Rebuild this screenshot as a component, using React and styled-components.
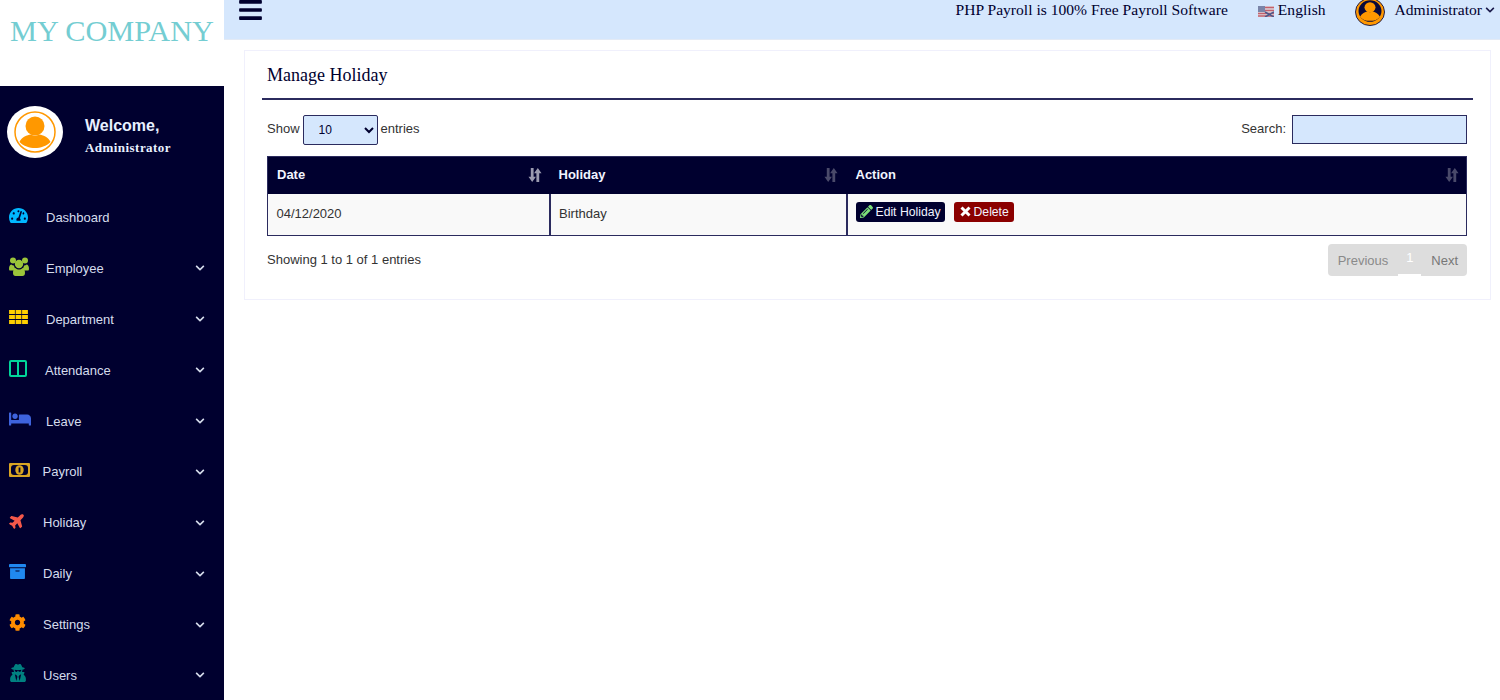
import React from "react";
import styled, { createGlobalStyle } from "styled-components";
import {
  FaBars,
  FaTachometerAlt,
  FaBed,
  FaPlane,
  FaArchive,
  FaCog,
  FaUserSecret,
  FaPencilAlt,
  FaChevronDown,
} from "react-icons/fa";

const NAVY = "#00002f";

const GlobalStyle = createGlobalStyle`
  html, body {
    margin: 0;
    padding: 0;
    height: 100%;
    background: #ffffff;
  }
  body {
    font-family: "Liberation Sans", Arial, sans-serif;
    overflow: hidden;
  }
  * { box-sizing: border-box; }
`;

const Page = styled.div`
  display: flex;
  width: 1500px;
  height: 700px;
  overflow: hidden;
`;

const Sidebar = styled.aside`
  width: 224px;
  flex: none;
  display: flex;
  flex-direction: column;
`;

const LogoBox = styled.div`
  flex: none;
  height: 86px;
  padding: 13px 0 0 10px;
  font-family: "Liberation Serif", serif;
  font-size: 30.3px;
  line-height: 36px;
  color: #74cdd2;
  white-space: nowrap;
`;

const SideBody = styled.div`
  flex: none;
  height: 614px;
  background: ${NAVY};
  display: flex;
  flex-direction: column;
`;

const Profile = styled.div`
  flex: none;
  height: 106px;
  padding: 20px 0 0 7px;
  display: flex;
  gap: 22px;
`;

const AvatarCircle = styled.div`
  width: 56px;
  height: 52px;
  border-radius: 50%;
  background: #fff;
  display: flex;
  align-items: center;
  justify-content: center;
`;

const ProfileText = styled.div`
  padding-top: 11px;
  color: #e8f0ff;
`;

const Welcome = styled.div`
  font-size: 16px;
  font-weight: 700;
  line-height: 18px;
`;

const ProfileName = styled.div`
  margin-top: 5px;
  font-family: "Liberation Serif", serif;
  font-size: 13px;
  font-weight: 700;
  line-height: 15px;
  letter-spacing: 0.45px;
`;

const Menu = styled.nav`
  display: flex;
  flex-direction: column;
`;

const MenuItem = styled.a`
  flex: none;
  height: 50.9px;
  display: flex;
  align-items: center;
  padding: 0 19px 0 9px;
  color: #d5dcec;
  font-size: 13px;
  svg { flex: none; }
`;

const MenuIcon = styled.span`
  width: ${(p) => p.$w}px;
  flex: none;
  display: flex;
  align-items: center;
  color: ${(p) => p.$color};
  transform: translateY(-2px);
`;

const MenuLabel = styled.span`
  flex: 1;
`;

const Chevron = styled(FaChevronDown)`
  color: #d5dcec;
  font-size: 10px;
`;

const TiltedPlane = styled(FaPlane)`
  transform: rotate(-45deg);
`;

const Main = styled.main`
  flex: 1;
  display: flex;
  flex-direction: column;
  min-width: 0;
`;

const TopBar = styled.header`
  height: 40px;
  flex: none;
  background: #d5e7fd;
  border-bottom: 1px solid #e3eaf5;
  padding: 0 5px 0 15px;
  display: flex;
  align-items: flex-start;
  color: #00002f;
  font-family: "Liberation Serif", serif;
  font-size: 15.6px;
`;

const Burger = styled(FaBars)`
  font-size: 23px;
  width: 23px;
  height: 26px;
  margin-top: -3px;
  color: ${NAVY};
`;

const TopRight = styled.div`
  margin-left: auto;
  display: flex;
  align-items: center;
  height: 20px;
`;

const Lang = styled.span`
  display: flex;
  align-items: center;
  gap: 4px;
  margin-left: 30px;
`;

const UserPic = styled.span`
  display: flex;
  margin: 4px 10px 0 29px;
`;

const TopChevron = styled(FaChevronDown)`
  font-size: 10px;
  margin-left: 3px;
  color: #1a1a4a;
`;

const Content = styled.div`
  flex: 1;
  padding: 10px 9px 0 20px;
`;

const Card = styled.section`
  height: 250px;
  border: 1px solid #f0f0fc;
  padding: 0 17px 0 17px;
`;

const CardTitle = styled.h2`
  margin: 0;
  height: 49px;
  padding: 13px 0 0 5px;
  border-bottom: 2px solid #2b2b5e;
  font-family: "Liberation Serif", serif;
  font-size: 18px;
  font-weight: 400;
  line-height: 22px;
  color: #00002f;
`;

const Wrap = styled.div`
  padding: 0 6px 0 5px;
  font-size: 13px;
  color: #333;
`;

const Controls = styled.div`
  height: 56px;
  display: flex;
  align-items: flex-start;
  justify-content: space-between;
  padding-top: 15px;
`;

const ControlGroup = styled.label`
  display: flex;
  align-items: flex-start;
  gap: ${(p) => p.$gap}px;
  height: 30px;
  line-height: 27px;
`;

const PageSize = styled.select`
  width: 75px;
  height: 30px;
  padding: 0 0 0 11px;
  background-color: #d5e7fd;
  border: 1px solid #2b2b5e;
  border-radius: 2px;
  font-family: "Liberation Sans", Arial, sans-serif;
  font-size: 12px;
  color: #00002f;
`;

const SearchInput = styled.input`
  width: 175px;
  height: 29px;
  background: #d5e7fd;
  border: 1px solid #2b2b5e;
  border-radius: 0;
  outline: none;
`;

const Table = styled.table`
  width: 1200px;
  border-collapse: collapse;
  table-layout: fixed;
  border: 1px solid #2b2b5e;
`;

const Head = styled.th`
  position: relative;
  width: ${(p) => p.$w}px;
  height: 37px;
  padding: 0 9px 2px;
  background: ${NAVY};
  color: #f2f5ff;
  font-size: 13px;
  font-weight: 700;
  text-align: left;
`;

const SortMark = styled.span`
  position: absolute;
  right: ${(p) => p.$right}px;
  top: 11px;
  display: flex;
  color: ${(p) => p.$color};
`;

const Cell = styled.td`
  height: 42px;
  padding: 0 8.5px 2px;
  background: #f9f9f9;
  border-right: 2px solid #2b2b5e;
  color: #333;
  font-size: 13px;
  &:last-child { border-right: 0; }
`;

const ActionCell = styled(Cell)`
  padding: 0 0 5px 8px;
`;

const ActionButton = styled.a`
  display: inline-flex;
  align-items: center;
  gap: 3px;
  height: 20px;
  margin-right: 9px;
  padding: 0 ${(p) => p.$right}px 0 ${(p) => p.$left}px;
  border-radius: 3px;
  background: ${(p) => p.$bg};
  color: #f0f3ff;
  font-size: 12.2px;
  vertical-align: middle;
`;

const PencilIcon = styled(FaPencilAlt)`
  color: #7de07a;
  font-size: 13px;
`;

const Footer = styled.div`
  display: flex;
  justify-content: space-between;
  align-items: flex-start;
  padding-top: 8px;
`;

const Info = styled.div`
  padding-top: 8px;
  line-height: 16px;
`;

const Pager = styled.div`
  display: flex;
  height: 32px;
  border-radius: 4px;
  overflow: hidden;
  background: #dddddd;
  font-size: 13px;
  color: #888;
`;

const PagerLink = styled.span`
  display: flex;
  align-items: center;
  padding-left: ${(p) => p.$l}px;
  padding-right: ${(p) => p.$r}px;
  color: ${(p) => p.$color};
`;

const PagerCurrent = styled.span`
  width: 23px;
  height: 32px;
  padding-top: 6px;
  text-align: center;
  line-height: 15px;
  color: #fff;
  border-bottom: 2px solid #fff;
`;

const SmallFlag = styled.svg`
  display: block;
  margin-top: 2px;
`;

function UserAvatar() {
  return (
    <svg width="46" height="46" viewBox="0 0 46 46">
      <circle cx="23" cy="23" r="20" fill="none" stroke="#ff9800" strokeWidth="1.5" />
      <circle cx="23" cy="17" r="9.5" fill="#ff9800" />
      <path d="M7.5 33c2-5 8-7 11-7.500 2.500 1.500 6.500 1.500 9 0 3 .5 9 2.500 11 7.500-4 4-10 6-15.500 6S11.500 37 7.500 33z" fill="#ff9800" />
    </svg>
  );
}

function TopAvatar() {
  return (
    <svg width="30" height="28" viewBox="0 0 30 30" preserveAspectRatio="none">
      <circle cx="15" cy="15" r="14.500" fill="#ff9800" stroke="#1a1a4a" strokeWidth="1" />
      <circle cx="15" cy="14" r="11.500" fill="#0a0a3a" />
      <circle cx="15" cy="10" r="5.500" fill="#ff9800" />
      <path d="M5 20c2-3.500 5-5 7.500-5.500 1.700 1 3.300 1 5 0 2.500.5 5.500 2 7.500 5.500-2 3-5.500 4.500-10 4.500S7 23 5 20z" fill="#ff9800" />
    </svg>
  );
}

function UsersIcon() {
  return (
    <svg width="20" height="19" viewBox="0 0 20 19" fill="#9bc53a">
      <circle cx="4" cy="3.500" r="3" />
      <circle cx="16" cy="3.500" r="3" />
      <circle cx="10" cy="7" r="4.200" />
      <path d="M0 12c0-3 1-4.500 2.500-4.500.8.800 1.500 1 2.500 1 0 1 .5 2 1.200 3-.6.500-1.200 1-1.500 2H1c-.6 0-1-.6-1-1.500z" />
      <path d="M20 12c0-3-1-4.500-2.500-4.500-.8.800-1.500 1-2.500 1 0 1-.5 2-1.200 3 .6.500 1.200 1 1.500 2H19c.6 0 1-.6 1-1.500z" />
      <path d="M6.500 11c1 1 2.200 1.500 3.500 1.500s2.500-.5 3.500-1.500c1.800 0 2.500 2.500 2.500 5 0 2-1 3-2.500 3h-7C5 19 4 18 4 16c0-2.500.7-5 2.500-5z" />
    </svg>
  );
}

function GridIcon() {
  const cells = [];
  for (let row = 0; row < 3; row++) {
    for (let col = 0; col < 3; col++) {
      cells.push(<rect key={`${row}-${col}`} x={col * 6.5} y={row * 5} width="5.800" height="4" />);
    }
  }
  return (
    <svg width="19" height="14" viewBox="0 0 18.800 14" fill="#ffd000">
      {cells}
    </svg>
  );
}

function ColumnsIcon() {
  return (
    <svg width="18" height="17" viewBox="0 0 18 17" fill="none" stroke="#00d69a" strokeWidth="2">
      <rect x="1" y="1" width="16" height="15" rx="1" />
      <path d="M9 1v15" />
    </svg>
  );
}

function MoneyIcon() {
  return (
    <svg width="21" height="14" viewBox="0 0 21 14">
      <rect width="21" height="14" rx="1" fill="#d9a423" />
      <rect x="2" y="2" width="17" height="10" rx="3" fill="#00002f" />
      <ellipse cx="10.500" cy="7" rx="4.200" ry="4.800" fill="#d9a423" />
      <rect x="9.600" y="4.500" width="1.800" height="5" fill="#00002f" />
    </svg>
  );
}

function FlagIcon() {
  return (
    <SmallFlag width="16" height="11" viewBox="0 0 16 11">
      <rect width="16" height="11" fill="#dcd6dc" />
      <path d="M0 1.500h16M0 4.500h16M0 7.500h16M0 10h16" stroke="#c4606c" strokeWidth="1.300" />
      <rect width="7" height="6" fill="#7a84a8" />
      <path d="M7 6l9 5M16 6l-9 5" stroke="#4c5a8c" strokeWidth="1.500" />
    </SmallFlag>
  );
}

function SortIcon() {
  return (
    <svg width="14" height="14" viewBox="0 0 14 15" fill="currentColor">
      <path d="M2.500 0h3v9.500H8L4 15 0 9.500h2.500z" />
      <path d="M8.500 15h3V5.500H14L10 0 6 5.500h2.500z" />
    </svg>
  );
}

function CrossGlyph() {
  return (
    <svg width="11" height="11" viewBox="0 0 11 11" fill="none" stroke="#fff" strokeWidth="3">
      <path d="M1.500 1.500l8 8M9.500 1.500l-8 8" />
    </svg>
  );
}

const menuItems = [
  { label: "Dashboard", w: 37, color: "#00b7ff", icon: <FaTachometerAlt size={19} />, noArrow: true },
  { label: "Employee", w: 37, color: "#9bc53a", icon: <UsersIcon /> },
  { label: "Department", w: 37, color: "#ffd000", icon: <GridIcon /> },
  { label: "Attendance", w: 36, color: "#00d69a", icon: <ColumnsIcon /> },
  { label: "Leave", w: 37, color: "#3e63dd", icon: <FaBed size={22} /> },
  { label: "Payroll", w: 33.500, color: "#d9a423", icon: <MoneyIcon /> },
  { label: "Holiday", w: 34, color: "#f4584a", icon: <TiltedPlane size={17} /> },
  { label: "Daily", w: 34, color: "#2088f0", icon: <FaArchive size={17} /> },
  { label: "Settings", w: 34, color: "#ff8c00", icon: <FaCog size={17} /> },
  { label: "Users", w: 34, color: "#008080", icon: <FaUserSecret size={18} /> },
];

export default function App() {
  return (
    <>
      <GlobalStyle />
      <Page>
        <Sidebar>
          <LogoBox>MY COMPANY</LogoBox>
          <SideBody>
            <Profile>
              <AvatarCircle>
                <UserAvatar />
              </AvatarCircle>
              <ProfileText>
                <Welcome>Welcome,</Welcome>
                <ProfileName>Administrator</ProfileName>
              </ProfileText>
            </Profile>
            <Menu>
              {menuItems.map((item) => (
                <MenuItem key={item.label}>
                  <MenuIcon $w={item.w} $color={item.color}>{item.icon}</MenuIcon>
                  <MenuLabel>{item.label}</MenuLabel>
                  {!item.noArrow && <Chevron />}
                </MenuItem>
              ))}
            </Menu>
          </SideBody>
        </Sidebar>
        <Main>
          <TopBar>
            <Burger />
            <TopRight>
              <span>PHP Payroll is 100% Free Payroll Software</span>
              <Lang>
                <FlagIcon />
                English
              </Lang>
              <UserPic>
                <TopAvatar />
              </UserPic>
              <span>Administrator</span>
              <TopChevron />
            </TopRight>
          </TopBar>
          <Content>
            <Card>
              <CardTitle>Manage Holiday</CardTitle>
              <Wrap>
                <Controls>
                  <ControlGroup $gap={3}>
                    Show
                    <PageSize defaultValue="10">
                      <option>10</option>
                      <option>25</option>
                      <option>50</option>
                    </PageSize>
                    entries
                  </ControlGroup>
                  <ControlGroup $gap={6}>
                    Search:
                    <SearchInput type="search" />
                  </ControlGroup>
                </Controls>
                <Table>
                  <thead>
                    <tr>
                      <Head $w={282}>
                        Date
                        <SortMark $right={8} $color="#9a9ab0"><SortIcon /></SortMark>
                      </Head>
                      <Head $w={297}>
                        Holiday
                        <SortMark $right={9} $color="#4a4a6a"><SortIcon /></SortMark>
                      </Head>
                      <Head>
                        Action
                        <SortMark $right={7} $color="#4a4a6a"><SortIcon /></SortMark>
                      </Head>
                    </tr>
                  </thead>
                  <tbody>
                    <tr>
                      <Cell>04/12/2020</Cell>
                      <Cell>Birthday</Cell>
                      <ActionCell>
                        <ActionButton $bg="#00002f" $left={4} $right={4}><PencilIcon />Edit Holiday</ActionButton>
                        <ActionButton $bg="#8b0000" $left={6} $right={5}><CrossGlyph />Delete</ActionButton>
                      </ActionCell>
                    </tr>
                  </tbody>
                </Table>
                <Footer>
                  <Info>Showing 1 to 1 of 1 entries</Info>
                  <Pager>
                    <PagerLink $l={10} $r={10} $color="#8a8a8a">Previous</PagerLink>
                    <PagerCurrent>1</PagerCurrent>
                    <PagerLink $l={10} $r={9} $color="#777">Next</PagerLink>
                  </Pager>
                </Footer>
              </Wrap>
            </Card>
          </Content>
        </Main>
      </Page>
    </>
  );
}
